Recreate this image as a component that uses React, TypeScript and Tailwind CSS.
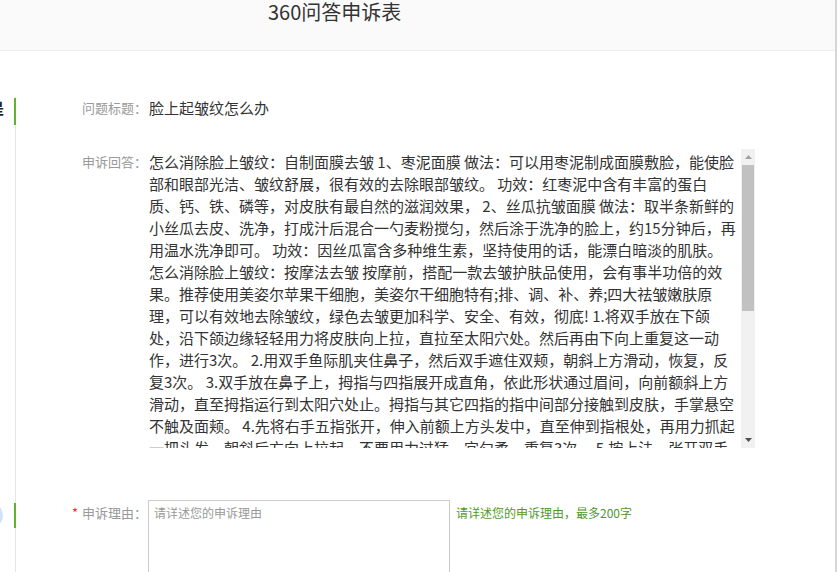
import React from 'react'

const answerLines = [
  '怎么消除脸上皱纹：自制面膜去皱 1、枣泥面膜 做法：可以用枣泥制成面膜敷脸，能使脸',
  '部和眼部光洁、皱纹舒展，很有效的去除眼部皱纹。 功效：红枣泥中含有丰富的蛋白',
  '质、钙、铁、磷等，对皮肤有最自然的滋润效果， 2、丝瓜抗皱面膜 做法：取半条新鲜的',
  '小丝瓜去皮、洗净，打成汁后混合一勺麦粉搅匀，然后涂于洗净的脸上，约15分钟后，再',
  '用温水洗净即可。 功效：因丝瓜富含多种维生素，坚持使用的话，能漂白暗淡的肌肤。',
  '怎么消除脸上皱纹：按摩法去皱 按摩前，搭配一款去皱护肤品使用，会有事半功倍的效',
  '果。推荐使用美姿尔苹果干细胞，美姿尔干细胞特有;排、调、补、养;四大祛皱嫩肤原',
  '理，可以有效地去除皱纹，绿色去皱更加科学、安全、有效，彻底! 1.将双手放在下颌',
  '处，沿下颌边缘轻轻用力将皮肤向上拉，直拉至太阳穴处。然后再由下向上重复这一动',
  '作，进行3次。 2.用双手鱼际肌夹住鼻子，然后双手遮住双颊，朝斜上方滑动，恢复，反',
  '复3次。 3.双手放在鼻子上，拇指与四指展开成直角，依此形状通过眉间，向前额斜上方',
  '滑动，直至拇指运行到太阳穴处止。拇指与其它四指的指中间部分接触到皮肤，手掌悬空',
  '不触及面颊。 4.先将右手五指张开，伸入前额上方头发中，直至伸到指根处，再用力抓起',
  '一把头发，朝斜后方向上拉起，不要用力过猛，宜匀柔，重复3次。 5.按上法，张开双手',
  '手指，从前额发际向后梳理头发，重复数次。',
]

const Marker = ({ className }: { className: string }) => (
  <div className={`absolute left-[-2px] w-[2px] bg-[#63b132] ${className}`} />
)

export default function App() {
  return (
    <div
      className="relative w-[840px] h-[572px] overflow-hidden bg-white text-[#333]"
      style={{ fontFamily: '"Noto Sans CJK SC", "Liberation Sans", sans-serif' }}
    >
      <div className="w-[837px] h-full border-r-2 border-[#d6d6d6]">
        {/* header */}
        <div className="h-[51px] bg-[#fafafa] border-b border-[#ededed]">
          <h1 className="pl-[268px] text-[20px] leading-[24px] font-normal text-[#333]">
            360问答申诉表
          </h1>
        </div>

        {/* clipped side nav bits */}
        <div className="absolute left-[-11px] top-[98px] text-[15px] font-bold leading-[20px] text-[#222]">
          是
        </div>
        <div className="absolute left-[-22px] top-[503px] w-[25px] h-[25px] rounded-full bg-[#cfe3fa]" />

        <div className="relative ml-[15px] mt-[46px] h-[480px] border-l border-[#e6e6e6]">
          {/* question title */}
          <div className="relative flex items-start">
            <Marker className="top-[1px] h-[27px]" />
            <div className="w-[131px] text-right text-[13px] leading-[22px] text-[#999]">问题标题：</div>
            <div className="ml-[2px] text-[15px] leading-[22px] text-[#333]">脸上起皱纹怎么办</div>
          </div>

          {/* answer */}
          <div className="flex items-start mt-[30px]">
            <div className="w-[131px] pt-[2px] text-right text-[13px] leading-[22px] text-[#999]">申诉回答：</div>
            <div className="ml-[2px] flex h-[299px] w-[606px]">
              <div className="w-[592px] pt-[2px] overflow-hidden text-[15px] leading-[22px] text-[#333]">
                {answerLines.map((line) => (
                  <div key={line} className="whitespace-nowrap">
                    {line}
                  </div>
                ))}
              </div>
              <div className="w-[14px] flex flex-col bg-[#f1f1f1]">
                <div className="h-[16px] flex items-center justify-center">
                  <svg width="7" height="4" viewBox="0 0 7 4">
                    <path d="M0 4 L3.5 0 L7 4 Z" fill="#a3a3a3" />
                  </svg>
                </div>
                <div className="h-[146px] mx-[1px] bg-[#c1c1c1]" />
                <div className="flex-1" />
                <div className="h-[16px] flex items-center justify-center">
                  <svg width="7" height="4" viewBox="0 0 7 4">
                    <path d="M0 0 L7 0 L3.5 4 Z" fill="#505050" />
                  </svg>
                </div>
              </div>
            </div>
          </div>

          {/* reason */}
          <div className="relative flex items-start mt-[52px]">
            <Marker className="top-[3px] h-[25px]" />
            <div className="w-[131px] pt-[2px] text-right text-[13px] leading-[22px] text-[#999]">
              <span className="text-[#e33] mr-[4px]">*</span>申诉理由：
            </div>
            <textarea
              className="ml-[1px] w-[302px] h-[120px] border border-[#ccc] px-[5px] pt-[4px] text-[12px] leading-[16px] text-[#333] placeholder:text-[#999] resize-none outline-none"
              placeholder="请详述您的申诉理由"
            />
            <div className="ml-[6px] pt-[3px] text-[12px] leading-[20px] text-[#4e9a28]">
              请详述您的申诉理由，最多200字
            </div>
          </div>
        </div>
      </div>
    </div>
  )
}
